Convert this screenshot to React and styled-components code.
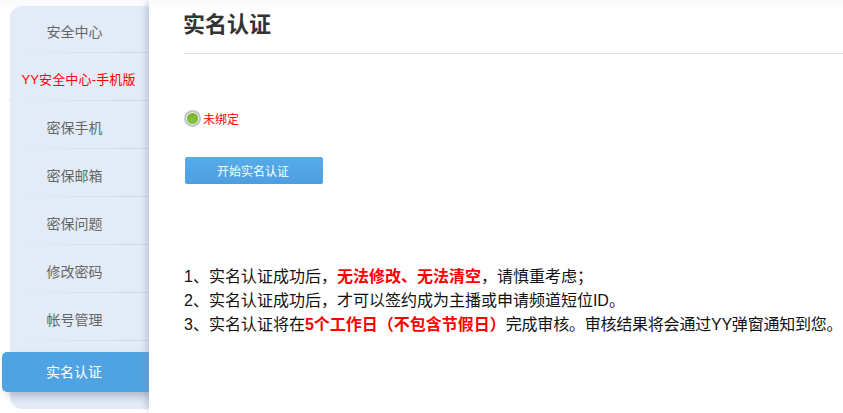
import React from 'react';
import styled, { createGlobalStyle } from 'styled-components';

const GlobalStyle = createGlobalStyle`
  html, body {
    margin: 0;
    padding: 0;
    background: #fff;
    overflow: hidden;
  }
  body {
    font-family: "Liberation Sans", "Noto Sans CJK SC", sans-serif;
  }
`;

const Page = styled.div`
  display: flex;
  width: 843px;
  height: 413px;
  overflow: hidden;
  background: linear-gradient(#f8fafd, #fff 8px);
`;

const Sidebar = styled.nav`
  box-sizing: border-box;
  flex: none;
  width: 139px;
  height: 403px;
  margin: 6px 0 0 10px;
  border-radius: 12px 0 0 12px;
  background: #e3ebf7;
  display: flex;
  flex-direction: column;
`;

const NavItem = styled.a`
  box-sizing: border-box;
  flex: none;
  height: 48px;
  padding: 4px ${(p) => (p.$alert ? '0' : '10px')} 0 0;
  margin-left: ${(p) => (p.$alert ? '-2px' : '0')};
  display: flex;
  align-items: center;
  justify-content: center;
  font-size: ${(p) => (p.$alert ? '13px' : '14px')};
  letter-spacing: ${(p) => (p.$alert ? '0.15px' : '0')};
  color: ${(p) => (p.$alert ? '#ff0000' : '#666')};
  white-space: nowrap;
  border-bottom: 1px solid;
  border-image: linear-gradient(to right, #e3ebf7 10%, #d6deeb 60%, #d0d8e7 100%) 1;
  &:first-child {
    height: 47px;
    padding-top: 3px;
  }
`;

const ActiveItem = styled.a`
  flex: none;
  width: 147px;
  height: 40px;
  margin: 11px 0 0 -8px;
  padding: 0 3px 2px 0;
  box-sizing: border-box;
  display: flex;
  align-items: center;
  justify-content: center;
  border-radius: 5px 0 0 5px;
  background: #50a3e2;
  color: #fff;
  font-size: 14px;
  box-shadow: 5px 5px 7px rgba(90, 105, 135, 0.35);
`;

const Main = styled.main`
  flex: 1;
  min-width: 0;
  position: relative;
  z-index: 1;
  background: linear-gradient(#f9fbfd, #fff 10px);
  box-shadow: -5px 0 8px -3px rgba(130, 145, 175, 0.45);
  padding-left: 36px;
`;

const Header = styled.header`
  height: 53px;
  margin-left: -1px;
  border-bottom: 1px solid #dfdfdf;
  display: flex;
  align-items: flex-start;
`;

const Title = styled.h1`
  margin: 9px 0 0 -1px;
  font-size: 22px;
  line-height: 32px;
  font-weight: 700;
  color: #333;
`;

const Status = styled.div`
  display: flex;
  align-items: center;
  gap: 2px;
  margin: 55px 0 0 -1px;
  height: 18px;
  font-size: 12px;
  color: #ff0000;
`;

const Radio = styled.span`
  box-sizing: border-box;
  width: 17px;
  height: 17px;
  border-radius: 50%;
  border: 2px solid #c3c6cc;
  background: radial-gradient(circle at 50% 65%, #8cc63f 0, #7ab52e 55%, #6fa828 100%);
  box-shadow: inset 0 0 0 1px #fff;
`;

const StartButton = styled.button`
  display: block;
  width: 138px;
  height: 27px;
  margin-top: 30px;
  padding: 0 2px 0 0;
  border: none;
  border-radius: 2px;
  background: linear-gradient(#55ace9, #4f9fe0);
  color: #fff;
  font-family: inherit;
  font-size: 12px;
`;

const Notes = styled.div`
  margin: 81px 0 0 -1px;
  font-size: 16px;
  line-height: 24px;
  color: #111;
  white-space: nowrap;
`;

const Strong = styled.strong`
  color: #ff0000;
  font-weight: 700;
`;

const Tail = styled.span`
  letter-spacing: -0.22px;
`;

const items = ['安全中心', 'YY安全中心-手机版', '密保手机', '密保邮箱', '密保问题', '修改密码', '帐号管理'];

export default function App() {
  return (
    <>
      <GlobalStyle />
      <Page>
        <Sidebar>
          {items.map((item, i) => (
            <NavItem key={item} $alert={i === 1}>
              {item}
            </NavItem>
          ))}
          <ActiveItem>实名认证</ActiveItem>
        </Sidebar>
        <Main>
          <Header>
            <Title>实名认证</Title>
          </Header>
          <Status>
            <Radio />
            未绑定
          </Status>
          <StartButton>开始实名认证</StartButton>
          <Notes>
            <div>
              1、实名认证成功后，<Strong>无法修改、无法清空</Strong>，请慎重考虑；
            </div>
            <div>2、实名认证成功后，才可以签约成为主播或申请频道短位ID。</div>
            <div>
              3、实名认证将在<Strong>5个工作日（不包含节假日）</Strong>
              <Tail>完成审核。审核结果将会通过YY弹窗通知到您。</Tail>
            </div>
          </Notes>
        </Main>
      </Page>
    </>
  );
}
